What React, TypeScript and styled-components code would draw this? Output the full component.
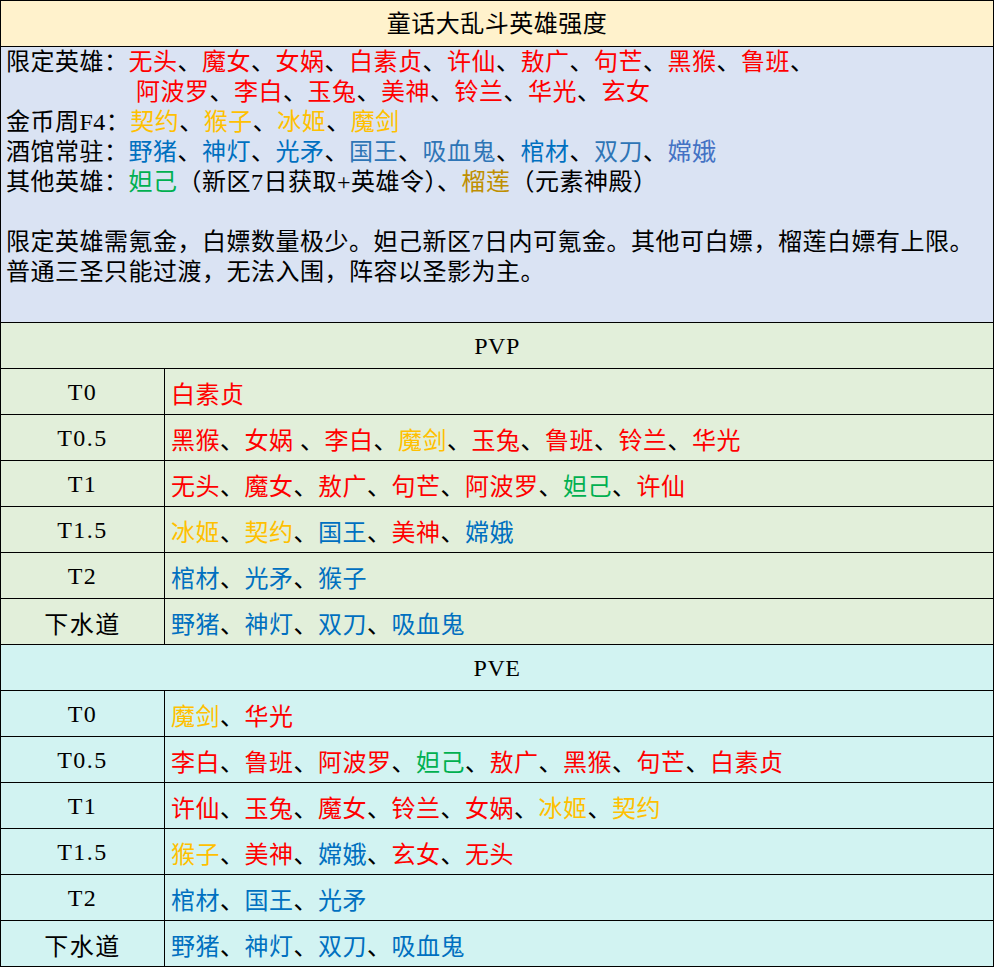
import { createGlobalStyle, styled } from 'styled-components';

const GlobalStyle = createGlobalStyle`
  html, body {
    margin: 0;
    padding: 0;
    background: #ffffff;
  }
  body {
    font-family: "Liberation Serif", "Noto Sans CJK SC", serif;
    color: #000;
  }
  * {
    box-sizing: border-box;
  }
`;

type Tone = 'red' | 'gold' | 'blue' | 'sky' | 'violet' | 'green' | 'brown';

const toneColor: Record<Tone, string> = {
  red: '#ff0000',
  gold: '#ffc000',
  blue: '#0070c0',
  sky: '#2e75b6',
  violet: '#4472c4',
  green: '#00b050',
  brown: '#bf8f00',
};

type Piece = [string, Tone?];

const Sheet = styled.div`
  width: 994px;
  border-left: 1px solid #000;
  border-top: 1px solid #000;
  display: flex;
  flex-direction: column;
  font-size: 24px;
  letter-spacing: 0.5px;
`;

const Banner = styled.div<{ $bg: string }>`
  height: 46px;
  display: flex;
  align-items: center;
  justify-content: center;
  background: ${(p) => p.$bg};
  border-right: 1px solid #000;
  border-bottom: 1px solid #000;
  line-height: 1;
`;

const InfoBlock = styled.div`
  height: 276px;
  padding: 0 5px;
  background: #dae3f3;
  border-right: 1px solid #000;
  border-bottom: 1px solid #000;
  line-height: 30px;
  white-space: nowrap;
`;

const InfoLine = styled.div<{ $indent?: number }>`
  height: 30px;
  padding-left: ${(p) => p.$indent ?? 0}px;
`;

const TierRow = styled.div<{ $bg: string }>`
  display: grid;
  grid-template-columns: 164px 1fr;
  height: 46px;
  background: ${(p) => p.$bg};
`;

const TierName = styled.div`
  display: flex;
  align-items: center;
  justify-content: center;
  border-right: 1px solid #000;
  border-bottom: 1px solid #000;
  padding-top: 2px;
  letter-spacing: 1.5px;
`;

const TierHeroes = styled.div`
  display: flex;
  align-items: center;
  padding: 2px 6px 0;
  border-right: 1px solid #000;
  border-bottom: 1px solid #000;
  white-space: pre;
`;

const Hero = styled.span<{ $tone?: Tone }>`
  color: ${(p) => (p.$tone ? toneColor[p.$tone] : '#000')};
`;

const Pieces = ({ items }: { items: Piece[] }) => (
  <>
    {items.map(([text, tone], i) => (
      <Hero key={i} $tone={tone}>
        {text}
      </Hero>
    ))}
  </>
);

// 名字 + 顿号 拼起来
const list = (names: string[], tone: Tone, tail = false): Piece[] => {
  const out: Piece[] = [];
  names.forEach((n, i) => {
    out.push([n, tone]);
    if (i < names.length - 1 || tail) out.push(['、']);
  });
  return out;
};

interface Tier {
  name: string;
  heroes: Piece[];
}

const pvp: Tier[] = [
  { name: 'T0', heroes: [['白素贞', 'red']] },
  {
    name: 'T0.5',
    heroes: [
      ['黑猴', 'red'],
      ['、'],
      ['女娲', 'red'],
      [' 、'],
      ['李白', 'red'],
      ['、'],
      ['魔剑', 'gold'],
      ['、'],
      ...list(['玉兔', '鲁班', '铃兰', '华光'], 'red'),
    ],
  },
  {
    name: 'T1',
    heroes: [...list(['无头', '魔女', '敖广', '句芒', '阿波罗'], 'red', true), ['妲己', 'green'], ['、'], ['许仙', 'red']],
  },
  {
    name: 'T1.5',
    heroes: [
      ...list(['冰姬', '契约'], 'gold', true),
      ['国王', 'blue'],
      ['、'],
      ['美神', 'red'],
      ['、'],
      ['嫦娥', 'blue'],
    ],
  },
  { name: 'T2', heroes: list(['棺材', '光矛', '猴子'], 'blue') },
  { name: '下水道', heroes: list(['野猪', '神灯', '双刀', '吸血鬼'], 'blue') },
];

const pve: Tier[] = [
  { name: 'T0', heroes: [['魔剑', 'gold'], ['、'], ['华光', 'red']] },
  {
    name: 'T0.5',
    heroes: [
      ...list(['李白', '鲁班', '阿波罗'], 'red', true),
      ['妲己', 'green'],
      ['、'],
      ...list(['敖广', '黑猴', '句芒', '白素贞'], 'red'),
    ],
  },
  {
    name: 'T1',
    heroes: [...list(['许仙', '玉兔', '魔女', '铃兰', '女娲'], 'red', true), ...list(['冰姬', '契约'], 'gold')],
  },
  {
    name: 'T1.5',
    heroes: [['猴子', 'gold'], ['、'], ['美神', 'red'], ['、'], ['嫦娥', 'blue'], ['、'], ...list(['玄女', '无头'], 'red')],
  },
  { name: 'T2', heroes: list(['棺材', '国王', '光矛'], 'blue') },
  { name: '下水道', heroes: list(['野猪', '神灯', '双刀', '吸血鬼'], 'blue') },
];

const TierSection = ({ title, bg, tiers }: { title: string; bg: string; tiers: Tier[] }) => (
  <>
    <Banner $bg={bg}>{title}</Banner>
    {tiers.map((t) => (
      <TierRow key={t.name} $bg={bg}>
        <TierName>{t.name}</TierName>
        <TierHeroes>
          <Pieces items={t.heroes} />
        </TierHeroes>
      </TierRow>
    ))}
  </>
);

export default function App() {
  return (
    <>
      <GlobalStyle />
      <Sheet>
        <Banner $bg="#fff2cc">童话大乱斗英雄强度</Banner>
        <InfoBlock>
          <InfoLine>
            限定英雄：
            <Pieces items={list(['无头', '魔女', '女娲', '白素贞', '许仙', '敖广', '句芒', '黑猴', '鲁班'], 'red', true)} />
          </InfoLine>
          <InfoLine $indent={130}>
            <Pieces items={list(['阿波罗', '李白', '玉兔', '美神', '铃兰', '华光', '玄女'], 'red')} />
          </InfoLine>
          <InfoLine>
            金币周F4：
            <Pieces items={list(['契约', '猴子', '冰姬', '魔剑'], 'gold')} />
          </InfoLine>
          <InfoLine>
            酒馆常驻：
            <Pieces
              items={[
                ...list(['野猪', '神灯', '光矛'], 'blue', true),
                ...list(['国王', '吸血鬼'], 'sky', true),
                ['棺材', 'blue'],
                ['、'],
                ['双刀', 'sky'],
                ['、'],
                ['嫦娥', 'violet'],
              ]}
            />
          </InfoLine>
          <InfoLine>
            其他英雄：
            <Pieces items={[['妲己', 'green'], ['（新区7日获取+英雄令）、'], ['榴莲', 'brown'], ['（元素神殿）']]} />
          </InfoLine>
          <InfoLine />
          <InfoLine>限定英雄需氪金，白嫖数量极少。妲己新区7日内可氪金。其他可白嫖，榴莲白嫖有上限。</InfoLine>
          <InfoLine>普通三圣只能过渡，无法入围，阵容以圣影为主。</InfoLine>
        </InfoBlock>
        <TierSection title="PVP" bg="#e2efda" tiers={pvp} />
        <TierSection title="PVE" bg="#d2f3f2" tiers={pve} />
      </Sheet>
    </>
  );
}
